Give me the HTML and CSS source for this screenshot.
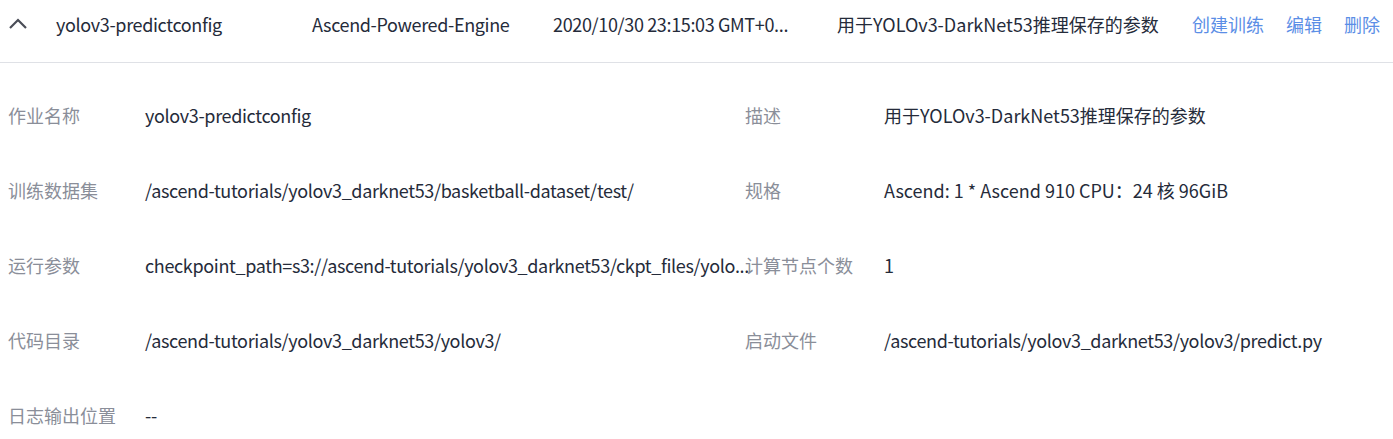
FILE: index.html
```html
<!DOCTYPE html>
<html lang="zh">
<head>
<meta charset="utf-8">
<link rel="stylesheet" href="styles.css">
</head>
<body>
<div class="job">
  <div class="job-head">
    <div class="cell cell-toggle">
      <svg class="chevron" width="20" height="12" viewBox="0 0 20 12"><path d="M2 10 L10 2 L18 10" fill="none" stroke="#4a4d57" stroke-width="2.2"/></svg>
    </div>
    <div class="cell cell-name">yolov3-predictconfig</div>
    <div class="cell cell-engine">Ascend-Powered-Engine</div>
    <div class="cell cell-date" title="2020/10/30 23:15:03 GMT+08:00">2020/10/30 23:15:03 GMT+0...</div>
    <div class="cell cell-desc mixed">用于YOLOv3-DarkNet53推理保存的参数</div>
    <div class="cell cell-actions">
      <a class="action">创建训练</a>
      <a class="action">编辑</a>
      <a class="action">删除</a>
    </div>
  </div>
  <div class="job-detail">
    <div class="field field-left">
      <div class="label">作业名称</div>
      <div class="value">yolov3-predictconfig</div>
    </div>
    <div class="field field-right">
      <div class="label">描述</div>
      <div class="value mixed">用于YOLOv3-DarkNet53推理保存的参数</div>
    </div>
    <div class="field field-left">
      <div class="label">训练数据集</div>
      <div class="value">/ascend-tutorials/yolov3_darknet53/basketball-dataset/test/</div>
    </div>
    <div class="field field-right">
      <div class="label">规格</div>
      <div class="value mixed">Ascend: 1 * Ascend 910 CPU：24 核 96GiB</div>
    </div>
    <div class="field field-left">
      <div class="label">运行参数</div>
      <div class="value">checkpoint_path=s3://ascend-tutorials/yolov3_darknet53/ckpt_files/yolo...</div>
    </div>
    <div class="field field-right">
      <div class="label">计算节点个数</div>
      <div class="value">1</div>
    </div>
    <div class="field field-left">
      <div class="label">代码目录</div>
      <div class="value">/ascend-tutorials/yolov3_darknet53/yolov3/</div>
    </div>
    <div class="field field-right">
      <div class="label">启动文件</div>
      <div class="value">/ascend-tutorials/yolov3_darknet53/yolov3/predict.py</div>
    </div>
    <div class="field field-left">
      <div class="label">日志输出位置</div>
      <div class="value">--</div>
    </div>
  </div>
</div>
</body>
</html>
```

FILE: styles.css
```css
html, body {
  margin: 0;
  padding: 0;
  background: #ffffff;
}

body {
  font-family: "Noto Sans CJK SC", "Noto Sans", sans-serif;
  font-size: 18px;
  color: #252b3a;
  width: 1393px;
  overflow: hidden;
}

.job-head {
  display: flex;
  align-items: center;
  height: 48px;
  padding-bottom: 14px;
  border-bottom: 1px solid #dfe1e6;
  white-space: nowrap;
}

.cell {
  line-height: 24px;
  letter-spacing: -0.35px;
}

.cell-toggle {
  width: 56px;
  display: flex;
  align-items: center;
  padding-left: 8px;
  box-sizing: border-box;
}

.cell-name { width: 256px; }
.cell-engine { width: 241px; }
.cell-date { width: 284px; }
.cell-desc { width: 355px; }

.cell-actions {
  display: flex;
  gap: 22px;
  letter-spacing: 0;
}

.action {
  color: #5b8ee6;
  cursor: pointer;
}

.job-detail {
  display: grid;
  grid-template-columns: 737px 1fr;
  padding: 14px 0 0 8px;
}

.field {
  display: flex;
  align-items: center;
  height: 75px;
  min-width: 0;
}

.label {
  color: #8a8e99;
  flex: none;
  white-space: nowrap;
}

.field-left .label { width: 137px; }
.field-right .label { width: 139px; }

.value {
  flex: 1;
  min-width: 0;
  white-space: nowrap;
  letter-spacing: -0.35px;
}

.cell.mixed,
.value.mixed {
  letter-spacing: 0;
}
```
